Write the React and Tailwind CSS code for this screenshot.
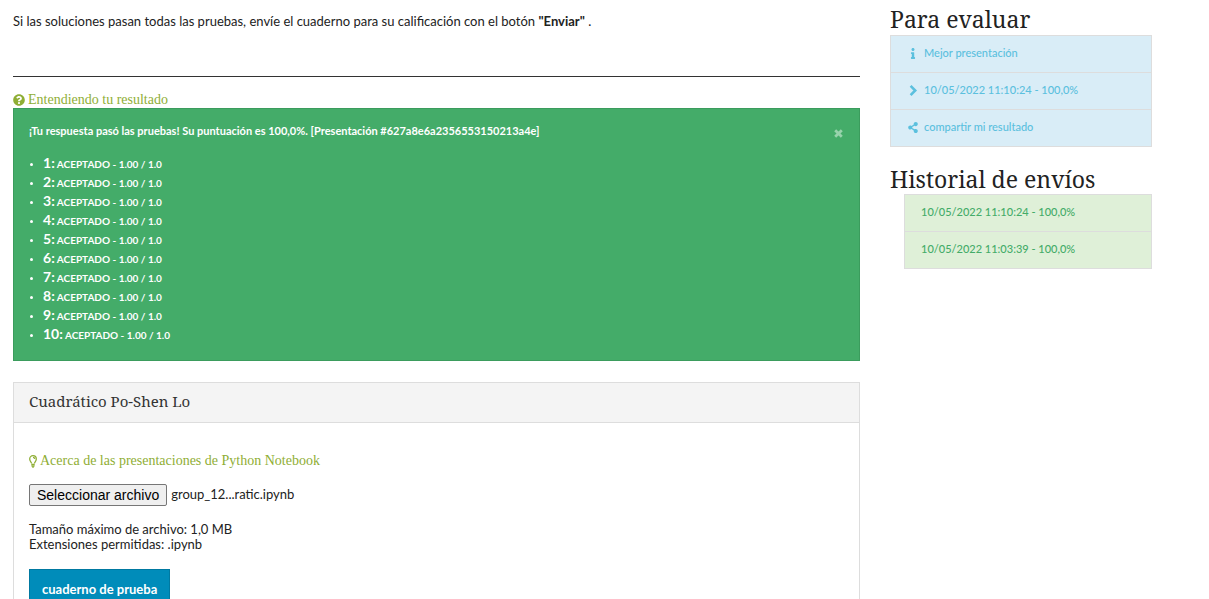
import { useState } from "react";
import { FaQuestionCircle, FaInfo, FaShareAlt } from "react-icons/fa";

function ChevronIcon({ className }) {
  return (
    <svg viewBox="0 0 12 12" fill="none" stroke="currentColor" strokeWidth="2.8" aria-hidden="true" className={className}>
      <path d="M3.4 1l5 5-5 5" />
    </svg>
  );
}

function CloseIcon({ className }) {
  return (
    <svg viewBox="0 0 12 12" fill="none" stroke="currentColor" strokeWidth="3" aria-hidden="true" className={className}>
      <path d="M2.4 2.4l7.2 7.2M9.6 2.4l-7.2 7.2" />
    </svg>
  );
}

function BulbIcon({ className }) {
  return (
    <svg viewBox="0 0 8 13" fill="none" stroke="currentColor" strokeWidth="1.3" aria-hidden="true" className={className}>
      <path d="M2.6 8.6C2.6 7 .7 6.4 .7 4A3.3 3.3 0 0 1 7.3 4C7.3 6.4 5.4 7 5.4 8.6M4 2.3a1.7 1.7 0 0 1 1.7 1.5" />
      <path d="M2.3 9.3h3.4M2.3 10.8h3.4M3.2 12.2h1.6" />
    </svg>
  );
}

const results = Array.from({ length: 10 }, (_, i) => i + 1);
const history = ["10/05/2022 11:10:24 - 100,0%", "10/05/2022 11:03:39 - 100,0%"];
const best = [
  { Icon: FaInfo, text: "Mejor presentación" },
  { Icon: ChevronIcon, text: "10/05/2022 11:10:24 - 100,0%" },
  { Icon: FaShareAlt, text: "compartir mi resultado" },
];

function ResultAlert({ onClose }) {
  return (
    <section className="border border-[#3b9c5d] bg-[#44ac69] px-[15px] pt-3.5 pb-[15px] text-white">
      <div className="flex items-center justify-between">
        <p className="text-[11px] leading-4 font-bold">
          ¡Tu respuesta pasó las pruebas! Su puntuación es 100,0%. [Presentación
          #627a8e6a2356553150213a4e]
        </p>
        <button type="button" aria-label="Cerrar" onClick={onClose} className="pt-1 text-[#98d3ac]">
          <CloseIcon className="size-[11px]" />
        </button>
      </div>
      <ul className="mt-4 list-disc pl-3.5 marker:text-[9px]">
        {results.map((n) => (
          <li key={n} className="text-[10px] leading-[19px] font-bold">
            <span className="text-sm leading-none">{n}:</span> ACEPTADO - 1.00 / 1.0
          </li>
        ))}
      </ul>
    </section>
  );
}

function SubmissionPanel() {
  return (
    <section className="mt-[21px] border border-[#dddddd]">
      <h2 className="border-b border-[#dddddd] bg-[#f4f4f4] px-[15px] pt-[7px] pb-[9px] font-['Noto_Serif','Liberation_Serif',serif] text-[15px] leading-[23px] text-[#333]">
        Cuadrático Po-Shen Lo
      </h2>
      <div className="px-[15px] pt-7 pb-6">
        <a
          href="#acerca"
          className="flex items-center gap-[3px] font-['Liberation_Serif',serif] text-sm leading-5 text-[#8fae35]"
        >
          <BulbIcon className="h-[13px] w-2" />
          Acerca de las presentaciones de Python Notebook
        </a>
        <div className="mt-[13px] flex items-center gap-1">
          <input id="notebook" type="file" accept=".ipynb" className="peer sr-only" />
          <label
            htmlFor="notebook"
            className="cursor-pointer rounded-xs border border-[#767676] bg-[#efefef] px-[7px] font-['Liberation_Sans',sans-serif] text-sm text-black peer-focus-visible:outline-2"
          >
            Seleccionar archivo
          </label>
          <span>group_12...ratic.ipynb</span>
        </div>
        <p className="mt-4 leading-[15px]">
          Tamaño máximo de archivo: 1,0 MB
          <br />
          Extensiones permitidas: .ipynb
        </p>
        <button
          type="button"
          className="mt-[17px] border border-[#0079a1] bg-[#008cba] px-3 py-2.5 text-[13px] leading-[18px] font-bold text-white"
        >
          cuaderno de prueba
        </button>
      </div>
    </section>
  );
}

export default function App() {
  const [open, setOpen] = useState(true);
  return (
    <div className="grid h-screen grid-cols-[847fr_262fr] items-start gap-[30px] overflow-hidden bg-white pr-[57px] pl-[13px] font-['Lato','Open_Sans',sans-serif] text-[13px] text-[#222]">
      <main>
        <p className="pt-[11px] leading-5">
          Si las soluciones pasan todas las pruebas, envíe el cuaderno para su calificación con el
          botón <strong>"Enviar"</strong> .
        </p>
        <hr className="mt-[45px] border-[#333]" />
        <a
          href="#resultado"
          className="mt-[15px] flex items-center gap-[3px] font-['Liberation_Serif',serif] text-sm leading-4 text-[#8fae35]"
        >
          <FaQuestionCircle className="size-3" />
          Entendiendo tu resultado
        </a>
        {open && <ResultAlert onClose={() => setOpen(false)} />}
        <SubmissionPanel />
      </main>
      <aside className="pt-1">
        <h2 className="font-['Noto_Serif','Liberation_Serif',serif] text-[23px] leading-[31px]">
          Para evaluar
        </h2>
        <ul className="divide-y divide-[#dddddd] border border-[#dddddd] bg-[#d9edf7] text-[11px] text-[#5bc0de]">
          {best.map(({ Icon, text }) => (
            <li key={text}>
              <a href="#envio" className="flex items-center gap-[5px] px-4 pb-0.5 leading-[34px] font-medium">
                <Icon className="h-[11px] w-3" />
                {text}
              </a>
            </li>
          ))}
        </ul>
        <h2 className="mt-[17px] font-['Noto_Serif','Liberation_Serif',serif] text-[23px] leading-[30px]">
          Historial de envíos
        </h2>
        <ul className="ml-3.5 divide-y divide-[#dddddd] border border-[#dddddd] bg-[#dff0d8] text-[11px] text-[#44ac69]">
          {history.map((text) => (
            <li key={text}>
              <a href="#historial" className="block px-4 pb-0.5 leading-[34px] font-medium">
                {text}
              </a>
            </li>
          ))}
        </ul>
      </aside>
    </div>
  );
}
